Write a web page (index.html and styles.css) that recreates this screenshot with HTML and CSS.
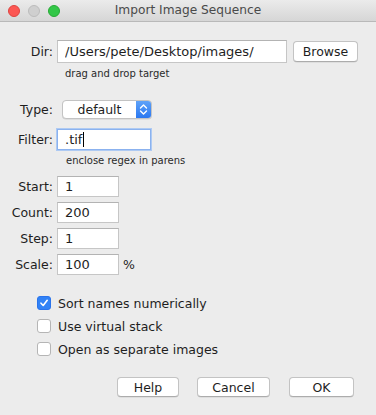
FILE: index.html
```html
<!DOCTYPE html>
<html lang="en">
<head>
  <meta charset="UTF-8" />
  <title>Import Image Sequence</title>
  <link rel="stylesheet" href="styles.css">
</head>
<body>
  <div class="window">
    <div class="titlebar">
      <div class="lights">
        <span class="light red"></span>
        <span class="light gray"></span>
        <span class="light green"></span>
      </div>
      <div class="title">Import Image Sequence</div>
    </div>

    <div class="content">
      <div class="row dir-row">
        <span class="label">Dir:</span>
        <input class="field dir-field" type="text" value="/Users/pete/Desktop/images/" />
        <button class="btn browse">Browse</button>
      </div>
      <div class="hint hint-dir">drag and drop target</div>

      <div class="row type-row">
        <span class="label">Type:</span>
        <div class="select">
          <span class="select-value">default</span>
          <span class="select-arrows">
            <svg width="9" height="13" viewBox="0 0 9 13">
              <path d="M1.5 5 L4.5 2 L7.5 5" fill="none" stroke="#fff" stroke-width="1.4" stroke-linecap="round" stroke-linejoin="round" />
              <path d="M1.5 8 L4.5 11 L7.5 8" fill="none" stroke="#fff" stroke-width="1.4" stroke-linecap="round" stroke-linejoin="round" />
            </svg>
          </span>
        </div>
      </div>

      <div class="row filter-row">
        <span class="label">Filter:</span>
        <div class="field filter-field focused">.tif<span class="caret"></span></div>
      </div>
      <div class="hint hint-filter">enclose regex in parens</div>

      <div class="num-rows">
        <div class="row num-row">
          <span class="label">Start:</span>
          <input class="field num-field" type="text" value="1" />
        </div>
        <div class="row num-row">
          <span class="label">Count:</span>
          <input class="field num-field" type="text" value="200" />
        </div>
        <div class="row num-row">
          <span class="label">Step:</span>
          <input class="field num-field" type="text" value="1" />
        </div>
        <div class="row num-row">
          <span class="label">Scale:</span>
          <input class="field num-field" type="text" value="100" />
          <span class="unit">%</span>
        </div>
      </div>

      <div class="checks">
        <label class="check">
          <span class="box checked">
            <svg width="10" height="10" viewBox="0 0 10 10">
              <path d="M2 5.2 L4.2 7.5 L8.2 2.3" fill="none" stroke="#fff" stroke-width="1.6" stroke-linecap="round" stroke-linejoin="round" />
            </svg>
          </span>
          Sort names numerically
        </label>
        <label class="check">
          <span class="box"></span>
          Use virtual stack
        </label>
        <label class="check">
          <span class="box"></span>
          Open as separate images
        </label>
      </div>

      <div class="buttons">
        <button class="btn help">Help</button>
        <button class="btn cancel">Cancel</button>
        <button class="btn ok">OK</button>
      </div>
    </div>
  </div>
</body>
</html>
```

FILE: styles.css
```css
body {
  margin: 0;
  background: #ececec;
  font-family: "DejaVu Sans", "Noto Sans", sans-serif;
  font-size: 12px;
  color: #1e1e1e;
}

.window {
  width: 376px;
  height: 415px;
  background: #ececec;
  overflow: hidden;
}

.titlebar {
  position: relative;
  height: 21px;
  background: linear-gradient(#ebebeb, #d6d6d6);
  border-bottom: 1px solid #b9b9b9;
}

.lights {
  display: flex;
  gap: 8px;
  padding: 5px 0 0 8px;
}

.light {
  width: 12px;
  height: 12px;
  border-radius: 50%;
  box-sizing: border-box;
}

.red {
  background: #fc5753;
  border: 1px solid #de4440;
}

.gray {
  background: #cfcfcf;
  border: 1px solid #bcbcbc;
}

.green {
  background: #33c748;
  border: 1px solid #27aa35;
}

.title {
  position: absolute;
  top: 0;
  left: 0;
  right: 0;
  line-height: 21px;
  text-align: center;
  font-size: 12.2px;
  color: #4a4a4a;
}

.content {
  padding-top: 18px;
}

.row {
  display: flex;
  align-items: center;
}

.label {
  width: 55px;
  text-align: right;
  padding-right: 2px;
  box-sizing: border-box;
  font-size: 12.5px;
}

.field {
  box-sizing: border-box;
  margin: 0 0 0 2px;
  padding: 0 0 0 7px;
  border: 1px solid #c6c6c6;
  border-top-color: #b3b3b3;
  background: #fff;
  font-family: inherit;
  font-size: 13px;
  color: #1e1e1e;
  outline: none;
}

.dir-row {
  height: 23px;
}

.dir-field {
  width: 230px;
  height: 23px;
}

.btn {
  box-sizing: border-box;
  height: 21px;
  padding: 0;
  border: 1px solid #c3c3c3;
  border-bottom-color: #acacac;
  border-radius: 4px;
  background: #fff;
  box-shadow: 0 0.5px 0.5px rgba(0, 0, 0, 0.12);
  font-family: inherit;
  font-size: 12.5px;
  color: #1e1e1e;
}

.browse {
  width: 65px;
  margin-left: 6px;
}

.hint {
  font-size: 10px;
  color: #2a2a2a;
  line-height: 12px;
}

.hint-dir {
  margin: 5px 0 0 65px;
}

.type-row {
  height: 19px;
  margin-top: 20px;
}

.select {
  display: flex;
  width: 90px;
  height: 19px;
  margin-left: 7px;
  box-sizing: border-box;
  border: 1px solid #c3c3c3;
  border-radius: 4px;
  background: #fff;
  overflow: hidden;
  box-shadow: 0 0.5px 0.5px rgba(0, 0, 0, 0.12);
}

.select-value {
  flex: 1;
  text-align: center;
  font-size: 12.5px;
  line-height: 17px;
}

.select-arrows {
  width: 15px;
  display: flex;
  align-items: center;
  justify-content: center;
  background: linear-gradient(#5fa2f8, #2a78f1);
}

.filter-row {
  height: 20px;
  margin-top: 10px;
}

.filter-field {
  width: 94px;
  height: 21px;
  line-height: 19px;
  display: flex;
  align-items: center;
}

.focused {
  border: 1px solid #8bb2ef;
  box-shadow: 0 0 0 1px #aecaf3;
}

.caret {
  display: inline-block;
  width: 1px;
  height: 15px;
  background: #000;
  margin-left: 1px;
}

.hint-filter {
  margin: 6px 0 0 66px;
}

.num-rows {
  display: flex;
  flex-direction: column;
  gap: 5px;
  margin-top: 9px;
}

.num-row {
  height: 21px;
}

.num-field {
  width: 62px;
  height: 21px;
}

.unit {
  margin-left: 4px;
  font-size: 12.5px;
}

.checks {
  display: flex;
  flex-direction: column;
  gap: 9px;
  margin: 21px 0 0 37px;
}

.check {
  display: flex;
  align-items: center;
  height: 14px;
  font-size: 12.5px;
}

.box {
  box-sizing: border-box;
  width: 14px;
  height: 14px;
  margin-right: 7px;
  border: 1px solid #b5b5b5;
  border-radius: 3px;
  background: #fff;
  display: flex;
  align-items: center;
  justify-content: center;
}

.box.checked {
  border-color: #2a74ec;
  background: #3182f6;
}

.buttons {
  display: flex;
  margin: 21px 0 0 117px;
}

.help {
  width: 62px;
  height: 20px;
}

.cancel {
  width: 73px;
  height: 20px;
  margin-left: 18px;
}

.ok {
  width: 65px;
  height: 20px;
  margin-left: 19px;
}
```
